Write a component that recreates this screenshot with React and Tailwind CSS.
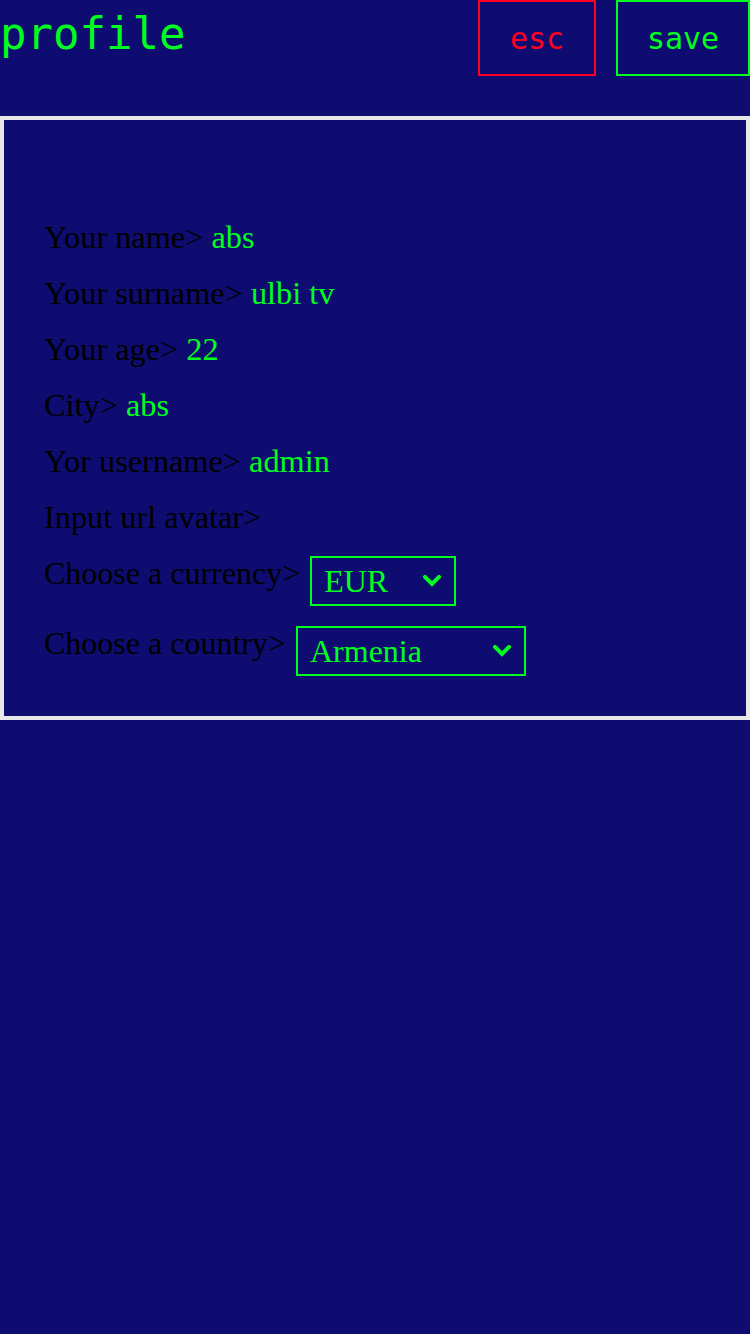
import React from "react";

const Chevron = () => (
  <svg width="18" height="12" viewBox="0 0 18 12" className="shrink-0">
    <path d="M2 2 L9 9 L16 2" fill="none" stroke="#00ff1e" strokeWidth="4" strokeLinecap="square" />
  </svg>
);

const Row = ({ label, value }) => (
  <div className="h-[36px] leading-[36px] whitespace-nowrap">
    <span className="text-black">{label}</span>
    {value !== undefined && <span className="text-[#00ff1e]"> {value}</span>}
  </div>
);

const SelectRow = ({ label, value, width }) => (
  <div className="flex items-start whitespace-nowrap text-[32px]">
    <span className="text-black leading-[36px]">{label}</span>
    <div
      className={`ml-[10px] mt-px h-[50px] border-2 border-[#00ff1e] flex items-center justify-between pl-[12px] pr-[13px] text-[#00ff1e] ${width}`}
    >
      <span className="leading-[36px]">{value}</span>
      <Chevron />
    </div>
  </div>
);

export default function App() {
  return (
    <div className="min-h-screen bg-[#0e0c70] w-[750px]">
      <div className="h-[116px] flex items-baseline justify-between">
        <h1 className="text-[44px] text-[#00ff1e] font-['DejaVu_Sans_Mono',monospace] leading-[normal]">
          profile
        </h1>
        <div className="flex items-baseline gap-[20px] font-['DejaVu_Sans_Mono',monospace] text-[30px] leading-[normal]">
          <button className="h-[76px] border-2 border-[#ff0022] text-[#ff0022] w-[118px] bg-transparent leading-[normal]">
            esc
          </button>
          <button className="h-[76px] border-2 border-[#00ff1e] text-[#00ff1e] w-[134px] bg-transparent leading-[normal]">
            save
          </button>
        </div>
      </div>
      <div className="border-4 border-[#e8e8e8] pt-[99px] px-[40px] pb-[40px] flex flex-col gap-[20px] font-['Liberation_Serif',serif] text-[32.3px]">
        <Row label="Your name>" value="abs" />
        <Row label="Your surname>" value="ulbi tv" />
        <Row label="Your age>" value="22" />
        <Row label="City>" value="abs" />
        <Row label="Yor username>" value="admin" />
        <Row label="Input url avatar>" />
        <div className="flex flex-col gap-[19px]">
          <SelectRow label="Choose a currency>" value="EUR" width="w-[146px]" />
          <SelectRow label="Choose a country>" value="Armenia" width="w-[230px]" />
        </div>
      </div>
    </div>
  );
}
